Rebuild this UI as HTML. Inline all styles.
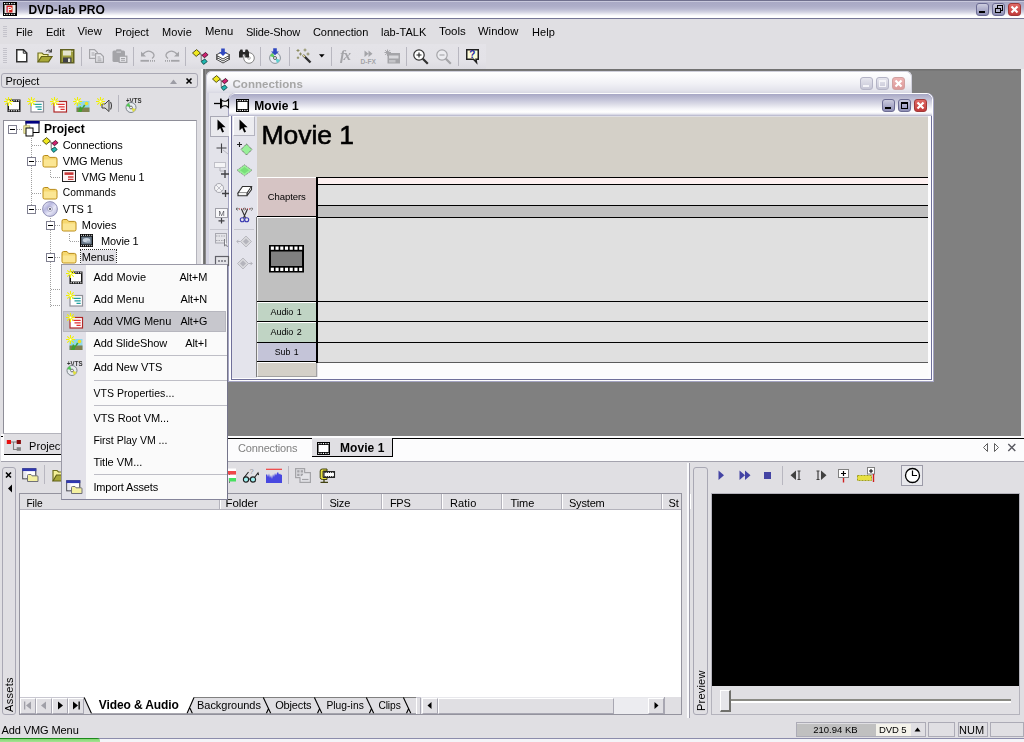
<!DOCTYPE html>
<html>
<head>
<meta charset="utf-8">
<title>DVD-lab PRO</title>
<style>
*{box-sizing:border-box;margin:0;padding:0}
html,body{width:1024px;height:742px;overflow:hidden;background:#e0dfe3}
body{position:relative;font-family:"Liberation Sans",sans-serif;font-size:12px;color:#000}
.a{position:absolute;display:block}
.t{position:absolute;white-space:nowrap;will-change:opacity}
svg{overflow:visible}
</style>
</head>
<body>
<div class="a" style="left:0px;top:0px;width:1024px;height:19px;background:linear-gradient(#70708e 0,#70708e 1px,#c8c8dc 1px,#c8c8dc 2px,#a9a9c5 2px,#adadc8 6px,#b9b9d1 9px,#d2d2e2 12px,#f0f0f5 14.5px,#fff 16px,#fff 18px,#767696 18px,#767696 19px);"></div>
<svg class="a" style="left:3px;top:2px;" width="14" height="14" viewBox="0 0 14 14"><rect x="0" y="0" width="14" height="14" fill="#000"/><rect x="1.5" y="3" width="11" height="8" fill="#e8e8e8"/><rect x="3.5" y="3.5" width="6" height="7" fill="#d02020"/><text x="4.6" y="9.8" font-size="7" font-weight="bold" fill="#fff" font-family="Liberation Sans,sans-serif">P</text><g fill="#fff"><rect x="1" y="1" width="1.2" height="1.2"/><rect x="3.4" y="1" width="1.2" height="1.2"/><rect x="5.8" y="1" width="1.2" height="1.2"/><rect x="8.2" y="1" width="1.2" height="1.2"/><rect x="10.6" y="1" width="1.2" height="1.2"/><rect x="1" y="11.8" width="1.2" height="1.2"/><rect x="3.4" y="11.8" width="1.2" height="1.2"/><rect x="5.8" y="11.8" width="1.2" height="1.2"/><rect x="8.2" y="11.8" width="1.2" height="1.2"/><rect x="10.6" y="11.8" width="1.2" height="1.2"/></g></svg>
<div class="t" style="left:28.4px;top:3.84px;font-size:12px;line-height:12px;font-weight:bold;letter-spacing:0.04px;">DVD-lab PRO</div>
<div class="a" style="left:976px;top:2.5px;width:13px;height:13px;background:linear-gradient(#ccccde,#b0b0cc 45%,#9090b6);border:1px solid #6c6c94;border-radius:3px;"></div>
<div class="a" style="left:979px;top:10.5px;width:6px;height:2px;background:#000;"></div>
<div class="a" style="left:992px;top:2.5px;width:13px;height:13px;background:linear-gradient(#ccccde,#b0b0cc 45%,#9090b6);border:1px solid #6c6c94;border-radius:3px;"></div>
<div class="a" style="left:997px;top:5.0px;width:5.5px;height:5.5px;border:1px solid #000;border-top-width:1.5px;"></div>
<div class="a" style="left:995px;top:7.5px;width:5.5px;height:5.5px;border:1px solid #000;border-top-width:1.5px;background:#b0b0ca;"></div>
<div class="a" style="left:1008px;top:2.5px;width:13px;height:13px;background:linear-gradient(#e06a66,#c23a3a);border:1px solid #a03838;border-radius:3px;"></div>
<svg class="a" style="left:1008px;top:2.5px;" width="13" height="13" viewBox="0 0 13 13"><path d="M3.5 3.5 L9.5 9.5 M9.5 3.5 L3.5 9.5" stroke="#fff" stroke-width="2.2" stroke-linecap="butt"/></svg>
<div class="a" style="left:3px;top:26px;width:4px;height:11px;background:repeating-linear-gradient(#c4c3cb 0,#c4c3cb 1px,transparent 1px,transparent 2px);"></div>
<div class="t" style="left:15.9px;top:27.11px;font-size:10.5px;line-height:10.5px;letter-spacing:-0.01px;">File</div>
<div class="t" style="left:45.9px;top:26.69px;font-size:11px;line-height:11px;letter-spacing:-0.02px;">Edit</div>
<div class="t" style="left:77.4px;top:26.48px;font-size:11.25px;line-height:11.25px;letter-spacing:0.07px;">View</div>
<div class="t" style="left:114.9px;top:26.69px;font-size:11px;line-height:11px;letter-spacing:-0.06px;">Project</div>
<div class="t" style="left:161.9px;top:26.69px;font-size:11px;line-height:11px;letter-spacing:0.14px;">Movie</div>
<div class="t" style="left:204.9px;top:26.48px;font-size:11.25px;line-height:11.25px;letter-spacing:0.08px;">Menu</div>
<div class="t" style="left:245.9px;top:26.69px;font-size:11px;line-height:11px;letter-spacing:-0.14px;">Slide-Show</div>
<div class="t" style="left:312.9px;top:26.69px;font-size:11px;line-height:11px;letter-spacing:-0.03px;">Connection</div>
<div class="t" style="left:380.9px;top:26.69px;font-size:11px;line-height:11px;letter-spacing:0.05px;">lab-TALK</div>
<div class="t" style="left:438.9px;top:26.27px;font-size:11.5px;line-height:11.5px;letter-spacing:0.01px;">Tools</div>
<div class="t" style="left:477.9px;top:26.48px;font-size:11.25px;line-height:11.25px;letter-spacing:0.08px;">Window</div>
<div class="t" style="left:531.9px;top:26.69px;font-size:11px;line-height:11px;letter-spacing:0.09px;">Help</div>
<div class="a" style="left:0px;top:44px;width:486px;height:25px;background:linear-gradient(#e4e3e8,#e3e2e7 70%,#dcdbe1);"></div>
<div class="a" style="left:3px;top:48px;width:4px;height:15px;background:repeating-linear-gradient(#c4c3cb 0,#c4c3cb 1px,transparent 1px,transparent 2px);"></div>
<div class="a" style="left:81px;top:47px;width:1px;height:19px;background:#b8b7c0;"></div>
<div class="a" style="left:133px;top:47px;width:1px;height:19px;background:#b8b7c0;"></div>
<div class="a" style="left:185px;top:47px;width:1px;height:19px;background:#b8b7c0;"></div>
<div class="a" style="left:260px;top:47px;width:1px;height:19px;background:#b8b7c0;"></div>
<div class="a" style="left:289px;top:47px;width:1px;height:19px;background:#b8b7c0;"></div>
<div class="a" style="left:331px;top:47px;width:1px;height:19px;background:#b8b7c0;"></div>
<div class="a" style="left:406px;top:47px;width:1px;height:19px;background:#b8b7c0;"></div>
<div class="a" style="left:458px;top:47px;width:1px;height:19px;background:#b8b7c0;"></div>
<div class="a" style="left:1px;top:73px;width:197px;height:15px;border:1px solid #a9a8b4;border-radius:3px;background:#e0dfe3;"></div>
<div class="t" style="left:5.4px;top:75.69px;font-size:11px;line-height:11px;letter-spacing:-0.06px;">Project</div>
<svg class="a" style="left:169px;top:77.5px;" width="10" height="8" viewBox="0 0 10 8"><path d="M1 6 L4.5 1.5 L8 6 Z" fill="#9c9ca4"/></svg>
<svg class="a" style="left:185px;top:77px;" width="10" height="8" viewBox="0 0 10 8"><path d="M1.5 1.5 L6.5 6.5 M6.5 1.5 L1.5 6.5" stroke="#000" stroke-width="1.6"/></svg>
<div class="a" style="left:118px;top:95px;width:1px;height:17px;background:#b8b7c0;"></div>
<div class="a" style="left:3px;top:120px;width:194px;height:314px;background:#fff;border:1px solid #8e8e98;border-right-color:#b4b4bc;border-bottom-color:#b4b4bc;"></div>
<div class="a" style="left:201px;top:69px;width:2px;height:368px;background:#f6f6f8;"></div>
<div class="a" style="left:203px;top:69px;width:821px;height:367px;background:#808080;"></div>
<div class="a" style="left:203px;top:69px;width:818px;height:2px;background:linear-gradient(#6e6e6e,#7a7a7a);"></div>
<div class="a" style="left:203px;top:69px;width:3px;height:367px;background:linear-gradient(90deg,#808080,#6c6c6c 50%,#989898);"></div>
<div class="a" style="left:1021px;top:69px;width:3px;height:368px;background:#f0f0f2;"></div>
<div class="a" style="left:206px;top:71px;width:706px;height:300px;background:#e0dfe3;border-radius:6px 6px 0 0;"></div>
<div class="a" style="left:206px;top:71px;width:706px;height:22px;background:linear-gradient(#ffffff 0,#fafafc 5px,#f0f0f5 12px,#e4e4ec 18px,#d4d4e0 22px);border-radius:6px 6px 0 0;border:1px solid #d0d0dc;border-bottom:none;"></div>
<div class="t" style="left:232.4px;top:78.57px;font-size:11.5px;line-height:11.5px;font-weight:bold;color:#a6a6a6;letter-spacing:0.08px;">Connections</div>
<div class="a" style="left:860px;top:76.5px;width:13px;height:13px;background:linear-gradient(#e6e6ee,#c6c6d6);border:1px solid #b4b4c6;border-radius:3px;"></div>
<div class="a" style="left:863px;top:84.5px;width:6px;height:2px;background:#f4f4f8;"></div>
<div class="a" style="left:876px;top:76.5px;width:13px;height:13px;background:linear-gradient(#e6e6ee,#c6c6d6);border:1px solid #b4b4c6;border-radius:3px;"></div>
<div class="a" style="left:879px;top:79.5px;width:7px;height:7px;border:1px solid #f4f4f8;border-top-width:2px;"></div>
<div class="a" style="left:892px;top:76.5px;width:13px;height:13px;background:linear-gradient(#eeb4b4,#dc9a9a);border:1px solid #d0a0a0;border-radius:3px;"></div>
<svg class="a" style="left:892px;top:76.5px;" width="13" height="13" viewBox="0 0 13 13"><path d="M3.5 3.5 L9.5 9.5 M9.5 3.5 L3.5 9.5" stroke="#fff" stroke-width="2.2" stroke-linecap="butt"/></svg>
<div class="a" style="left:206px;top:93px;width:23px;height:280px;background:#e3e3ea;border-left:3px solid #d4d4e2;"></div>
<div class="a" style="left:228px;top:92.5px;width:705.5px;height:289.5px;background:#a4a4c2;border-radius:7px 7px 0 0;"></div>
<div class="a" style="left:228.6px;top:93.2px;width:704.3px;height:288.2px;background:#fdfdfe;border-radius:6.5px 6.5px 0 0;"></div>
<div class="a" style="left:230.8px;top:94px;width:701px;height:286.2px;background:#70709a;border-radius:6px 6px 0 0;"></div>
<div class="a" style="left:232px;top:95px;width:698.6px;height:284px;background:#fdfdfe;border-radius:5px 5px 0 0;"></div>
<div class="a" style="left:229px;top:93.5px;width:703px;height:22px;background:linear-gradient(#a6a6c4 0,#b2b2cc 2px,#c6c6da 6px,#e0e0ea 11px,#f6f6fa 15px,#ffffff 18px,#e8e8f0 20px,#b0b0c8 22px);border-radius:6px 6px 0 0;"></div>
<div class="a" style="left:232px;top:116px;width:696px;height:260.5px;background:#e0dfe3;"></div>
<div class="t" style="left:254.2px;top:99.84px;font-size:12px;line-height:12px;font-weight:bold;letter-spacing:0.06px;">Movie 1</div>
<div class="a" style="left:882px;top:98.5px;width:13px;height:13px;background:linear-gradient(#ccccde,#b0b0cc 45%,#9090b6);border:1px solid #6c6c94;border-radius:3px;"></div>
<div class="a" style="left:885px;top:106.5px;width:6px;height:2px;background:#000;"></div>
<div class="a" style="left:898px;top:98.5px;width:13px;height:13px;background:linear-gradient(#ccccde,#b0b0cc 45%,#9090b6);border:1px solid #6c6c94;border-radius:3px;"></div>
<div class="a" style="left:901px;top:101.5px;width:7px;height:7px;border:1px solid #000;border-top-width:2px;"></div>
<div class="a" style="left:914px;top:98.5px;width:13px;height:13px;background:linear-gradient(#e06a66,#c23a3a);border:1px solid #a03838;border-radius:3px;"></div>
<svg class="a" style="left:914px;top:98.5px;" width="13" height="13" viewBox="0 0 13 13"><path d="M3.5 3.5 L9.5 9.5 M9.5 3.5 L3.5 9.5" stroke="#fff" stroke-width="2.2" stroke-linecap="butt"/></svg>
<svg class="a" style="left:236px;top:99px;" width="13" height="13" viewBox="0 0 13 13"><rect x="0" y="0" width="13" height="13" fill="#000"/><rect x="1.5" y="3" width="10" height="7" fill="#fff"/><rect x="1.20" y="1" width="1.2" height="1.2" fill="#fff"/><rect x="1.20" y="10.80" width="1.2" height="1.2" fill="#fff"/><rect x="3.55" y="1" width="1.2" height="1.2" fill="#fff"/><rect x="3.55" y="10.80" width="1.2" height="1.2" fill="#fff"/><rect x="5.90" y="1" width="1.2" height="1.2" fill="#fff"/><rect x="5.90" y="10.80" width="1.2" height="1.2" fill="#fff"/><rect x="8.25" y="1" width="1.2" height="1.2" fill="#fff"/><rect x="8.25" y="10.80" width="1.2" height="1.2" fill="#fff"/><rect x="10.60" y="1" width="1.2" height="1.2" fill="#fff"/><rect x="10.60" y="10.80" width="1.2" height="1.2" fill="#fff"/></svg>
<div class="a" style="left:232px;top:116px;width:25px;height:262px;background:#e4e4ec;"></div>
<div class="a" style="left:232.5px;top:116px;width:22px;height:20px;background:#ececf0;border:1px solid #fff;border-right-color:#b4b4c0;border-bottom-color:#b4b4c0;"></div>
<div class="a" style="left:257px;top:117px;width:671px;height:60px;background:#d4d0c8;"></div>
<div class="t" style="left:261.5px;top:121.97px;font-size:26.5px;line-height:26.5px;-webkit-text-stroke:0.6px #000;letter-spacing:-0.05px;">Movie 1</div>
<div class="a" style="left:257px;top:177px;width:59.5px;height:40px;background:#d6c4c4;border-top:1px solid #fff;border-left:1px solid #f0f0f0;"></div>
<div class="a" style="left:257px;top:217px;width:59.5px;height:85px;background:#c0c0c0;border-top:1px solid #fff;border-left:1px solid #f0f0f0;"></div>
<div class="a" style="left:257px;top:302px;width:59.5px;height:20px;background:#c0d4c4;border-top:1px solid #fff;border-left:1px solid #f0f0f0;"></div>
<div class="a" style="left:257px;top:322px;width:59.5px;height:20px;background:#c0d4c4;border-top:1px solid #fff;border-left:1px solid #f0f0f0;"></div>
<div class="a" style="left:257px;top:342px;width:59.5px;height:20px;background:#c4c4d8;border-top:1px solid #fff;border-left:1px solid #f0f0f0;"></div>
<div class="a" style="left:257px;top:362px;width:59.5px;height:14.5px;background:#d4d0c8;border-top:1px solid #fff;border-left:1px solid #f0f0f0;border-right:1px solid #a0a0a0;border-bottom:1px solid #a0a0a0;"></div>
<div class="a" style="left:318px;top:177px;width:609.5px;height:185px;background:#e0e0e0;"></div>
<div class="a" style="left:318px;top:177px;width:609.5px;height:1px;background:#000;"></div>
<div class="a" style="left:318px;top:178px;width:609.5px;height:5.5px;background:#fdf0f0;"></div>
<div class="a" style="left:318px;top:183.5px;width:609.5px;height:1px;background:#000;"></div>
<div class="a" style="left:318px;top:205px;width:609.5px;height:1px;background:#000;"></div>
<div class="a" style="left:318px;top:206px;width:609.5px;height:10.5px;background:#c0c0c0;"></div>
<div class="a" style="left:318px;top:216.5px;width:609.5px;height:1px;background:#000;"></div>
<div class="a" style="left:257px;top:301.2px;width:670.5px;height:1.2px;background:#000;"></div>
<div class="a" style="left:257px;top:321.3px;width:670.5px;height:1.2px;background:#000;"></div>
<div class="a" style="left:257px;top:341.5px;width:670.5px;height:1.2px;background:#000;"></div>
<div class="a" style="left:257px;top:360.8px;width:60px;height:1.2px;background:#000;"></div>
<div class="a" style="left:257px;top:216px;width:60px;height:1px;background:#000;"></div>
<div class="a" style="left:316px;top:177px;width:2px;height:185.5px;background:#000;"></div>
<div class="a" style="left:256px;top:217px;width:1px;height:160px;background:#7c7c7c;"></div>
<div class="a" style="left:318px;top:362px;width:609.5px;height:14.5px;background:#fcfcfc;"></div>
<div class="a" style="left:318px;top:361.8px;width:609.5px;height:1px;background:#5c5c5c;"></div>
<div class="t" style="left:267.8px;top:192.46px;font-size:9.5px;line-height:9.5px;letter-spacing:-0.08px;">Chapters</div>
<div class="t" style="left:270.4px;top:307.88px;font-size:9px;line-height:9px;word-spacing:1px;letter-spacing:-0.01px;">Audio 1</div>
<div class="t" style="left:270.4px;top:327.88px;font-size:9px;line-height:9px;word-spacing:1px;letter-spacing:-0.01px;">Audio 2</div>
<div class="t" style="left:274.8px;top:348.09px;font-size:8.75px;line-height:8.75px;word-spacing:1px;letter-spacing:-0.02px;">Sub 1</div>
<svg class="a" style="left:269px;top:245px;" width="35" height="27.5" viewBox="0 0 35 27.5"><rect x="0" y="0" width="35" height="27.5" fill="#000"/><rect x="2" y="6.5" width="31" height="14.5" fill="#808080"/><rect x="1.80" y="1.5" width="3.1" height="3.3" fill="#fff"/><rect x="1.80" y="22.7" width="3.1" height="3.3" fill="#fff"/><rect x="6.52" y="1.5" width="3.1" height="3.3" fill="#fff"/><rect x="6.52" y="22.7" width="3.1" height="3.3" fill="#fff"/><rect x="11.24" y="1.5" width="3.1" height="3.3" fill="#fff"/><rect x="11.24" y="22.7" width="3.1" height="3.3" fill="#fff"/><rect x="15.96" y="1.5" width="3.1" height="3.3" fill="#fff"/><rect x="15.96" y="22.7" width="3.1" height="3.3" fill="#fff"/><rect x="20.68" y="1.5" width="3.1" height="3.3" fill="#fff"/><rect x="20.68" y="22.7" width="3.1" height="3.3" fill="#fff"/><rect x="25.40" y="1.5" width="3.1" height="3.3" fill="#fff"/><rect x="25.40" y="22.7" width="3.1" height="3.3" fill="#fff"/><rect x="30.12" y="1.5" width="3.1" height="3.3" fill="#fff"/><rect x="30.12" y="22.7" width="3.1" height="3.3" fill="#fff"/></svg>
<div class="a" style="left:0px;top:436px;width:1024px;height:25px;background:#fcfcfd;"></div>
<div class="a" style="left:0px;top:461px;width:1024px;height:1px;background:#a4a3ae;"></div>
<div class="a" style="left:198px;top:438px;width:826px;height:1px;background:#000;"></div>
<div class="a" style="left:0px;top:434px;width:1px;height:28px;background:#e0dfe3;"></div>
<div class="a" style="left:1px;top:434px;width:3px;height:2px;background:#fcfcfd;"></div>
<div class="a" style="left:1px;top:436px;width:2px;height:1px;background:#000;"></div>
<div class="a" style="left:4px;top:434px;width:196px;height:2px;background:#e0dfe3;"></div>
<div class="a" style="left:4px;top:436px;width:120px;height:18px;background:#e0dfe3;"></div>
<div class="a" style="left:4px;top:454px;width:120px;height:1px;background:#000;"></div>
<div class="a" style="left:198px;top:436px;width:5px;height:3px;background:#e0dfe3;"></div>
<div class="a" style="left:198px;top:439px;width:2px;height:22px;background:#e0dfe3;"></div>
<svg class="a" style="left:6px;top:439px;" width="16" height="13" viewBox="0 0 16 13"><path d="M3 3 H12 M7.5 3 V10.5 H12" fill="none" stroke="#808080" stroke-width="1.1"/><rect x="0.8" y="1" width="4.2" height="4" fill="#e81010"/><rect x="10.7" y="1" width="4.2" height="4" fill="#880808"/><rect x="10.7" y="8.2" width="4.2" height="3.6" fill="#808080"/></svg>
<div class="t" style="left:29.1px;top:440.69px;font-size:11px;line-height:11px;letter-spacing:0.02px;">Project</div>
<div class="t" style="left:238.1px;top:442.69px;font-size:11px;line-height:11px;color:#808080;letter-spacing:-0.18px;">Connections</div>
<div class="a" style="left:312px;top:439px;width:81px;height:18px;background:#e0dfe3;border-right:1.5px solid #000;border-bottom:1.5px solid #000;"></div>
<div class="a" style="left:312px;top:438px;width:79.5px;height:1px;background:#e0dfe3;"></div>
<svg class="a" style="left:317px;top:442px;" width="13" height="13" viewBox="0 0 13 13"><rect x="0" y="0" width="13" height="13" fill="#000"/><rect x="1.5" y="3" width="10" height="7" fill="#fff"/><rect x="1.20" y="1" width="1.2" height="1.2" fill="#fff"/><rect x="1.20" y="10.80" width="1.2" height="1.2" fill="#fff"/><rect x="3.55" y="1" width="1.2" height="1.2" fill="#fff"/><rect x="3.55" y="10.80" width="1.2" height="1.2" fill="#fff"/><rect x="5.90" y="1" width="1.2" height="1.2" fill="#fff"/><rect x="5.90" y="10.80" width="1.2" height="1.2" fill="#fff"/><rect x="8.25" y="1" width="1.2" height="1.2" fill="#fff"/><rect x="8.25" y="10.80" width="1.2" height="1.2" fill="#fff"/><rect x="10.60" y="1" width="1.2" height="1.2" fill="#fff"/><rect x="10.60" y="10.80" width="1.2" height="1.2" fill="#fff"/></svg>
<div class="t" style="left:340px;top:442.14px;font-size:12px;line-height:12px;font-weight:bold;letter-spacing:0.06px;">Movie 1</div>
<svg class="a" style="left:980px;top:442px;" width="40" height="12" viewBox="0 0 40 12"><path d="M7.5 1.5 L3.5 5.5 L7.5 9.5 Z" fill="none" stroke="#606060" stroke-width="1"/><path d="M14.5 1.5 L18.5 5.5 L14.5 9.5 Z" fill="none" stroke="#606060" stroke-width="1"/><path d="M28.3 2 L35.3 9 M35.3 2 L28.3 9" stroke="#585860" stroke-width="1.4"/></svg>
<div class="a" style="left:1.5px;top:467px;width:14px;height:247.5px;border:1px solid #a9a8b4;border-radius:3px;"></div>
<svg class="a" style="left:5px;top:471px;" width="8" height="8" viewBox="0 0 8 8"><path d="M1 1.5 L6 6.5 M6 1.5 L1 6.5" stroke="#000" stroke-width="1.6"/></svg>
<svg class="a" style="left:7px;top:484px;" width="6" height="9" viewBox="0 0 6 9"><path d="M5 0.5 L1 4.5 L5 8.5 Z" fill="#000"/></svg>
<div class="t" style="left:3px;top:711.5px;font-size:11px;line-height:12px;transform-origin:0 0;transform:rotate(-90deg);letter-spacing:0.3px;">Assets</div>
<div class="a" style="left:44px;top:465px;width:1px;height:19px;background:#b8b7c0;"></div>
<div class="a" style="left:288px;top:466px;width:1px;height:18px;background:#b8b7c0;"></div>
<div class="a" style="left:19px;top:493px;width:663px;height:222px;border:1px solid #94939e;background:#fff;"></div>
<div class="a" style="left:20px;top:494px;width:661px;height:16px;background:#e0dfe3;border-bottom:1px solid #b4b3bc;"></div>
<div class="a" style="left:218.5px;top:494px;width:1px;height:15px;background:#b4b3bc;"></div>
<div class="a" style="left:219.5px;top:494px;width:1px;height:15px;background:#fff;"></div>
<div class="t" style="left:26.4px;top:498.62px;font-size:10.25px;line-height:10.25px;letter-spacing:-0.04px;">File</div>
<div class="a" style="left:321.0px;top:494px;width:1px;height:15px;background:#b4b3bc;"></div>
<div class="a" style="left:322.0px;top:494px;width:1px;height:15px;background:#fff;"></div>
<div class="t" style="left:225.4px;top:497.57px;font-size:11.5px;line-height:11.5px;letter-spacing:-0.04px;">Folder</div>
<div class="a" style="left:381.0px;top:494px;width:1px;height:15px;background:#b4b3bc;"></div>
<div class="a" style="left:382.0px;top:494px;width:1px;height:15px;background:#fff;"></div>
<div class="t" style="left:329.4px;top:497.99px;font-size:11px;line-height:11px;letter-spacing:-0.17px;">Size</div>
<div class="a" style="left:441.0px;top:494px;width:1px;height:15px;background:#b4b3bc;"></div>
<div class="a" style="left:442.0px;top:494px;width:1px;height:15px;background:#fff;"></div>
<div class="t" style="left:389.9px;top:497.99px;font-size:11px;line-height:11px;letter-spacing:-0.25px;">FPS</div>
<div class="a" style="left:501.0px;top:494px;width:1px;height:15px;background:#b4b3bc;"></div>
<div class="a" style="left:502.0px;top:494px;width:1px;height:15px;background:#fff;"></div>
<div class="t" style="left:449.9px;top:497.99px;font-size:11px;line-height:11px;letter-spacing:0.18px;">Ratio</div>
<div class="a" style="left:561.0px;top:494px;width:1px;height:15px;background:#b4b3bc;"></div>
<div class="a" style="left:562.0px;top:494px;width:1px;height:15px;background:#fff;"></div>
<div class="t" style="left:510.4px;top:497.99px;font-size:11px;line-height:11px;letter-spacing:-0.05px;">Time</div>
<div class="a" style="left:661.0px;top:494px;width:1px;height:15px;background:#b4b3bc;"></div>
<div class="a" style="left:662.0px;top:494px;width:1px;height:15px;background:#fff;"></div>
<div class="t" style="left:568.9px;top:497.99px;font-size:11px;line-height:11px;letter-spacing:-0.16px;">System</div>
<div class="a" style="left:688.5px;top:494px;width:1px;height:15px;background:#b4b3bc;"></div>
<div class="a" style="left:689.5px;top:494px;width:1px;height:15px;background:#fff;"></div>
<div class="t" style="left:668.4px;top:497.99px;font-size:11px;line-height:11px;letter-spacing:-0.01px;">St</div>
<div class="a" style="left:20px;top:697px;width:661px;height:16.5px;background:#e0dfe3;border-top:1px solid #c8c7d0;"></div>
<div class="a" style="left:20px;top:698px;width:16px;height:15.5px;background:#e0dfe3;border:1px solid #fff;border-right-color:#a8a7b2;border-bottom-color:#a8a7b2;"></div>
<svg class="a" style="left:20px;top:698px;" width="16" height="15.5" viewBox="0 0 16 15.5"><rect x="4" y="3.5" width="1.3" height="8" fill="#a0a0a8"/><path d="M11 3.5 L6 7.5 L11 11.5 Z" fill="#a0a0a8"/></svg>
<div class="a" style="left:36px;top:698px;width:16px;height:15.5px;background:#e0dfe3;border:1px solid #fff;border-right-color:#a8a7b2;border-bottom-color:#a8a7b2;"></div>
<svg class="a" style="left:36px;top:698px;" width="16" height="15.5" viewBox="0 0 16 15.5"><path d="M10 3.5 L5 7.5 L10 11.5 Z" fill="#a0a0a8"/></svg>
<div class="a" style="left:52px;top:698px;width:16px;height:15.5px;background:#e0dfe3;border:1px solid #fff;border-right-color:#a8a7b2;border-bottom-color:#a8a7b2;"></div>
<svg class="a" style="left:52px;top:698px;" width="16" height="15.5" viewBox="0 0 16 15.5"><path d="M6 3.5 L11 7.5 L6 11.5 Z" fill="#000"/></svg>
<div class="a" style="left:68px;top:698px;width:16px;height:15.5px;background:#e0dfe3;border:1px solid #fff;border-right-color:#a8a7b2;border-bottom-color:#a8a7b2;"></div>
<svg class="a" style="left:68px;top:698px;" width="16" height="15.5" viewBox="0 0 16 15.5"><path d="M5 3.5 L10 7.5 L5 11.5 Z" fill="#000"/><rect x="10.5" y="3.5" width="1.3" height="8" fill="#000"/></svg>
<svg class="a" style="left:84px;top:697px;" width="336" height="17" viewBox="0 0 336 17"><path d="M110 0.5 H332" stroke="#808080" stroke-width="1"/>
<path d="M0 0 L7.5 16.5 H103 L110 0 Z" fill="#fff"/>
<path d="M0.2 0.5 L7.5 16.5 M103 16.5 L110 0.5 M106 11.2 L108.4 16.5" fill="none" stroke="#000" stroke-width="1.1"/>
<path d="M179.3 0.5 L186.8 16.5 M182.3 16.5 L184.7 11.2" fill="none" stroke="#000" stroke-width="1.1"/><path d="M230.4 0.5 L237.9 16.5 M233.4 16.5 L235.8 11.2" fill="none" stroke="#000" stroke-width="1.1"/><path d="M282.3 0.5 L289.8 16.5 M285.3 16.5 L287.7 11.2" fill="none" stroke="#000" stroke-width="1.1"/><path d="M319.4 0.5 L326.9 16.5 M322.4 16.5 L324.8 11.2" fill="none" stroke="#000" stroke-width="1.1"/>
<path d="M7.5 16.8 H332" stroke="#8a8a94" stroke-width="1" fill="none"/></svg>
<div class="t" style="left:98.8px;top:699.24px;font-size:12px;line-height:12px;font-weight:bold;letter-spacing:-0.11px;">Video &amp; Audio</div>
<div class="t" style="left:197px;top:700.09px;font-size:11px;line-height:11px;letter-spacing:-0.03px;">Backgrounds</div>
<div class="t" style="left:275.2px;top:700.09px;font-size:11px;line-height:11px;letter-spacing:-0.15px;">Objects</div>
<div class="t" style="left:326.4px;top:700.72px;font-size:10.25px;line-height:10.25px;letter-spacing:0.05px;">Plug-ins</div>
<div class="t" style="left:378.4px;top:700.72px;font-size:10.25px;line-height:10.25px;letter-spacing:-0.10px;">Clips</div>
<div class="a" style="left:416px;top:698px;width:1px;height:15.5px;background:#fff;"></div>
<div class="a" style="left:420px;top:698px;width:1px;height:15.5px;background:#a8a7b2;"></div>
<div class="a" style="left:421px;top:697px;width:244px;height:16.5px;background:#e8e8ec;"></div>
<div class="a" style="left:422px;top:698px;width:16px;height:15.5px;background:#e0dfe3;border:1px solid #fff;border-right-color:#a8a7b2;border-bottom-color:#a8a7b2;"></div>
<svg class="a" style="left:422px;top:698px;" width="16" height="15.5" viewBox="0 0 16 15.5"><path d="M9.5 4 L5.5 7.5 L9.5 11 Z" fill="#000"/></svg>
<div class="a" style="left:438px;top:698px;width:176px;height:15.5px;background:#e0dfe3;border:1px solid #fff;border-right-color:#a8a7b2;border-bottom-color:#a8a7b2;"></div>
<div class="a" style="left:614px;top:698px;width:34px;height:15.5px;background:#ececf0;"></div>
<div class="a" style="left:648px;top:698px;width:16px;height:15.5px;background:#e0dfe3;border:1px solid #fff;border-right-color:#a8a7b2;border-bottom-color:#a8a7b2;"></div>
<svg class="a" style="left:648px;top:698px;" width="16" height="15.5" viewBox="0 0 16 15.5"><path d="M6.5 4 L10.5 7.5 L6.5 11 Z" fill="#000"/></svg>
<div class="a" style="left:664px;top:697px;width:17px;height:16.5px;background:#e0dfe3;border-left:1px solid #a8a7b2;"></div>
<div class="a" style="left:687px;top:463px;width:2px;height:255px;background:#fafafc;"></div>
<div class="a" style="left:689px;top:463px;width:1px;height:255px;background:#a09fac;"></div>
<div class="a" style="left:693px;top:467px;width:14.5px;height:247.5px;border:1px solid #a9a8b4;border-radius:3px;"></div>
<div class="t" style="left:694.5px;top:710.5px;font-size:11px;line-height:12px;transform-origin:0 0;transform:rotate(-90deg);letter-spacing:0.2px;">Preview</div>
<div class="a" style="left:711px;top:493px;width:309px;height:222px;border:1px solid #b4b3bc;"></div>
<div class="a" style="left:712px;top:494px;width:307px;height:192px;background:#000;"></div>
<div class="a" style="left:730px;top:699px;width:281px;height:2px;background:#8a8a84;"></div>
<div class="a" style="left:730px;top:701px;width:281px;height:2px;background:#fff;"></div>
<div class="a" style="left:720px;top:690px;width:11px;height:22px;background:#e6e6ea;border:1px solid #fff;border-right:2px solid #70706c;border-bottom:2px solid #70706c;"></div>
<svg class="a" style="left:718px;top:470px;" width="8" height="11" viewBox="0 0 8 11"><path d="M0.5 0.5 L6 5.2 L0.5 10 Z" fill="#4444a4"/></svg>
<svg class="a" style="left:739px;top:470px;" width="12" height="11" viewBox="0 0 12 11"><path d="M0.5 0.5 L6 5.2 L0.5 10 Z M6 0.5 L11.5 5.2 L6 10 Z" fill="#4444a4"/></svg>
<div class="a" style="left:764px;top:472px;width:7px;height:7px;background:#4444a4;"></div>
<div class="a" style="left:782px;top:466px;width:1px;height:19px;background:#b8b7c0;"></div>
<svg class="a" style="left:790px;top:470px;" width="12" height="11" viewBox="0 0 12 11"><path d="M6 0.5 L0.5 5.2 L6 10 Z" fill="#404040"/><path d="M7.5 1 H10.5 M9 1 V9.5 M7.5 9.5 H10.5" stroke="#404040" stroke-width="1.2" fill="none"/></svg>
<svg class="a" style="left:815px;top:470px;" width="12" height="11" viewBox="0 0 12 11"><path d="M6 0.5 L11.5 5.2 L6 10 Z" fill="#404040"/><path d="M1.5 1 H4.5 M3 1 V9.5 M1.5 9.5 H4.5" stroke="#404040" stroke-width="1.2" fill="none"/></svg>
<svg class="a" style="left:838px;top:469px;" width="12" height="14" viewBox="0 0 12 14"><rect x="0.5" y="0.5" width="10" height="8" fill="#fff" stroke="#808080"/><path d="M3 4.5 H8 M5.5 2 V7" stroke="#000" stroke-width="1.2"/><path d="M5.5 9 V13.5" stroke="#d02020" stroke-width="1.4"/></svg>
<svg class="a" style="left:857px;top:467px;" width="19" height="16" viewBox="0 0 19 16"><rect x="10.5" y="0.5" width="7" height="6.5" fill="#fff" stroke="#808080"/><path d="M12 4 H16 M14 2 V6" stroke="#000" stroke-width="1"/><path d="M16.5 7 V15" stroke="#d02020" stroke-width="1.4"/><rect x="0.5" y="8.5" width="14" height="5" fill="#e8e040" stroke="#a0a020" stroke-dasharray="2 1"/></svg>
<div class="a" style="left:900.5px;top:464.5px;width:22.5px;height:21px;border:1px solid #9c9ba8;background:#e8e8ec;"></div>
<svg class="a" style="left:904px;top:467px;" width="17" height="17" viewBox="0 0 17 17"><circle cx="8.5" cy="8.5" r="7" fill="#fff" stroke="#000" stroke-width="1.3"/><path d="M8.5 3.5 V8.5 H13" stroke="#000" stroke-width="1.2" fill="none"/></svg>
<div class="t" style="left:1.4px;top:725.09px;font-size:11px;line-height:11px;letter-spacing:-0.08px;">Add VMG Menu</div>
<div class="a" style="left:795.5px;top:722px;width:130px;height:15px;border:1px solid #acabb6;"></div>
<div class="a" style="left:797px;top:723.5px;width:78.5px;height:12px;background:#c0c0c0;"></div>
<div class="a" style="left:875.5px;top:723.5px;width:35.5px;height:12px;background:#f4f2ea;"></div>
<div class="t" style="left:813.2px;top:725.16px;font-size:9.5px;line-height:9.5px;letter-spacing:0.00px;">210.94 KB</div>
<div class="t" style="left:879px;top:725.16px;font-size:9.5px;line-height:9.5px;letter-spacing:-0.10px;">DVD 5</div>
<svg class="a" style="left:914px;top:726px;" width="8" height="6" viewBox="0 0 8 6"><path d="M0.5 5.5 L3.5 1.5 L6.5 5.5 Z" fill="#000"/></svg>
<div class="a" style="left:928px;top:722px;width:27px;height:15px;border:1px solid #acabb6;"></div>
<div class="a" style="left:957.5px;top:722px;width:30.5px;height:15px;border:1px solid #acabb6;"></div>
<div class="t" style="left:958.9px;top:724.69px;font-size:11px;line-height:11px;letter-spacing:0.17px;">NUM</div>
<div class="a" style="left:990px;top:722px;width:34px;height:15px;border:1px solid #acabb6;"></div>
<div class="a" style="left:0px;top:738px;width:1024px;height:1px;background:#8c8cac;"></div>
<div class="a" style="left:0px;top:739px;width:1024px;height:3px;background:#f4f4f8;"></div>
<div class="a" style="left:0px;top:738px;width:100px;height:4px;background:linear-gradient(#1c8a1c 0,#1c8a1c 1px,#8ad878 1.5px,#a4e494 4px);border-radius:0 3px 0 0;"></div>
<div class="a" style="left:17px;top:129px;width:6px;height:1px;background:repeating-linear-gradient(90deg,#a0a0a0 0,#a0a0a0 1px,transparent 1px,transparent 2px);"></div>
<div class="a" style="left:31px;top:138px;width:1px;height:67px;background:repeating-linear-gradient(#a0a0a0 0,#a0a0a0 1px,transparent 1px,transparent 2px);"></div>
<div class="a" style="left:32px;top:145px;width:10px;height:1px;background:repeating-linear-gradient(90deg,#a0a0a0 0,#a0a0a0 1px,transparent 1px,transparent 2px);"></div>
<div class="a" style="left:36px;top:161px;width:6px;height:1px;background:repeating-linear-gradient(90deg,#a0a0a0 0,#a0a0a0 1px,transparent 1px,transparent 2px);"></div>
<div class="a" style="left:32px;top:193px;width:10px;height:1px;background:repeating-linear-gradient(90deg,#a0a0a0 0,#a0a0a0 1px,transparent 1px,transparent 2px);"></div>
<div class="a" style="left:36px;top:209px;width:6px;height:1px;background:repeating-linear-gradient(90deg,#a0a0a0 0,#a0a0a0 1px,transparent 1px,transparent 2px);"></div>
<div class="a" style="left:50px;top:170px;width:1px;height:8px;background:repeating-linear-gradient(#a0a0a0 0,#a0a0a0 1px,transparent 1px,transparent 2px);"></div>
<div class="a" style="left:51px;top:177px;width:10px;height:1px;background:repeating-linear-gradient(90deg,#a0a0a0 0,#a0a0a0 1px,transparent 1px,transparent 2px);"></div>
<div class="a" style="left:50px;top:218px;width:1px;height:89px;background:repeating-linear-gradient(#a0a0a0 0,#a0a0a0 1px,transparent 1px,transparent 2px);"></div>
<div class="a" style="left:55px;top:225px;width:6px;height:1px;background:repeating-linear-gradient(90deg,#a0a0a0 0,#a0a0a0 1px,transparent 1px,transparent 2px);"></div>
<div class="a" style="left:55px;top:257px;width:6px;height:1px;background:repeating-linear-gradient(90deg,#a0a0a0 0,#a0a0a0 1px,transparent 1px,transparent 2px);"></div>
<div class="a" style="left:69px;top:234px;width:1px;height:8px;background:repeating-linear-gradient(#a0a0a0 0,#a0a0a0 1px,transparent 1px,transparent 2px);"></div>
<div class="a" style="left:70px;top:241px;width:10px;height:1px;background:repeating-linear-gradient(90deg,#a0a0a0 0,#a0a0a0 1px,transparent 1px,transparent 2px);"></div>
<div class="a" style="left:51px;top:289px;width:11px;height:1px;background:repeating-linear-gradient(90deg,#a0a0a0 0,#a0a0a0 1px,transparent 1px,transparent 2px);"></div>
<div class="a" style="left:51px;top:305px;width:11px;height:1px;background:repeating-linear-gradient(90deg,#a0a0a0 0,#a0a0a0 1px,transparent 1px,transparent 2px);"></div>
<div class="a" style="left:8px;top:125px;width:9px;height:9px;border:1px solid #808090;background:#fff;"></div>
<div class="a" style="left:10px;top:129px;width:5px;height:1px;background:#000;"></div>
<div class="a" style="left:27px;top:157px;width:9px;height:9px;border:1px solid #808090;background:#fff;"></div>
<div class="a" style="left:29px;top:161px;width:5px;height:1px;background:#000;"></div>
<div class="a" style="left:27px;top:205px;width:9px;height:9px;border:1px solid #808090;background:#fff;"></div>
<div class="a" style="left:29px;top:209px;width:5px;height:1px;background:#000;"></div>
<div class="a" style="left:46px;top:221px;width:9px;height:9px;border:1px solid #808090;background:#fff;"></div>
<div class="a" style="left:48px;top:225px;width:5px;height:1px;background:#000;"></div>
<div class="a" style="left:46px;top:253px;width:9px;height:9px;border:1px solid #808090;background:#fff;"></div>
<div class="a" style="left:48px;top:257px;width:5px;height:1px;background:#000;"></div>
<svg class="a" style="left:23px;top:121px;" width="17" height="16" viewBox="0 0 17 16"><rect x="3" y="0.5" width="13" height="11" fill="#fff" stroke="#000" stroke-width="1"/><rect x="2.5" y="0" width="14" height="2.6" fill="#000080"/><rect x="0.8" y="4.8" width="6" height="7.5" fill="#f4f0a8" stroke="#b0a860" stroke-width="0.8"/><rect x="3" y="7" width="7" height="8" fill="#fff" stroke="#000" stroke-width="1"/></svg>
<svg class="a" style="left:42px;top:137px;" width="16" height="16" viewBox="0 0 16 16"><path d="M7.5 5 H9.2 V11.6 H10.5 M9.2 6.2 H10.5" fill="none" stroke="#707070" stroke-width="1"/><path d="M0.5 4 L4.6 0.6 L8.4 4 L4.2 7.4 Z" fill="#f0e820" stroke="#303000" stroke-width="0.8"/><path d="M10 6.3 L13.6 3.4 L16 5.8 L12.4 8.8 Z" fill="#d02070" stroke="#300018" stroke-width="0.8"/><path d="M9.2 12.6 L12.8 10 L15.2 12.6 L11.6 15.4 Z" fill="#20b8b0" stroke="#003838" stroke-width="0.8"/></svg>
<svg class="a" style="left:42px;top:154px;" width="16" height="14" viewBox="0 0 16 14"><path d="M1 3.2 Q1 1.5 2.6 1.5 H6 L7.6 3.4 H13.4 Q15 3.4 15 5 V11.4 Q15 13 13.4 13 H2.6 Q1 13 1 11.4 Z" fill="#f6d870" stroke="#b88a18" stroke-width="1"/><path d="M1.8 5.6 H14.2 V11.4 Q14.2 12.3 13.3 12.3 H2.7 Q1.8 12.3 1.8 11.4 Z" fill="#fbe694"/></svg>
<svg class="a" style="left:62px;top:170px;" width="14" height="12" viewBox="0 0 14 12"><rect x="0.5" y="0.5" width="13" height="11" fill="#fff4f4" stroke="#202020" stroke-width="1"/><rect x="2.5" y="2.3" width="9" height="2.6" fill="#c83838"/><path d="M6 7 H11.5 M6 9.3 H11.5" stroke="#d04040" stroke-width="1.3"/></svg>
<svg class="a" style="left:42px;top:186px;" width="16" height="14" viewBox="0 0 16 14"><path d="M1 3.2 Q1 1.5 2.6 1.5 H6 L7.6 3.4 H13.4 Q15 3.4 15 5 V11.4 Q15 13 13.4 13 H2.6 Q1 13 1 11.4 Z" fill="#f6d870" stroke="#b88a18" stroke-width="1"/><path d="M1.8 5.6 H14.2 V11.4 Q14.2 12.3 13.3 12.3 H2.7 Q1.8 12.3 1.8 11.4 Z" fill="#fbe694"/></svg>
<svg class="a" style="left:42px;top:201px;" width="16" height="16" viewBox="0 0 16 16"><defs><linearGradient id="dv" x1="0" y1="0" x2="1" y2="1"><stop offset="0" stop-color="#ffffff"/><stop offset="0.35" stop-color="#b8b8e0"/><stop offset="0.6" stop-color="#e8e8f8"/><stop offset="1" stop-color="#a8a8d0"/></linearGradient></defs><circle cx="8" cy="8" r="7.4" fill="url(#dv)" stroke="#8888b0" stroke-width="0.9"/><circle cx="8" cy="8" r="2.4" fill="#f4f4fc" stroke="#9090b0" stroke-width="0.7"/><circle cx="8" cy="8" r="1" fill="#404058"/></svg>
<svg class="a" style="left:61px;top:218px;" width="16" height="14" viewBox="0 0 16 14"><path d="M1 3.2 Q1 1.5 2.6 1.5 H6 L7.6 3.4 H13.4 Q15 3.4 15 5 V11.4 Q15 13 13.4 13 H2.6 Q1 13 1 11.4 Z" fill="#f6d870" stroke="#b88a18" stroke-width="1"/><path d="M1.8 5.6 H14.2 V11.4 Q14.2 12.3 13.3 12.3 H2.7 Q1.8 12.3 1.8 11.4 Z" fill="#fbe694"/></svg>
<svg class="a" style="left:80.4px;top:234px;" width="13" height="13" viewBox="0 0 13 13"><rect x="0" y="0" width="13" height="13" fill="#080808"/><rect x="1.2" y="2.6" width="10.6" height="7.8" fill="#687888"/><ellipse cx="6.5" cy="6.3" rx="3.6" ry="2.2" fill="#c8d4e0"/><ellipse cx="8.5" cy="7.6" rx="2" ry="1.2" fill="#a0b0c0"/><rect x="1.0" y="0.8" width="1" height="1" fill="#fff"/><rect x="1.0" y="11.2" width="1" height="1" fill="#fff"/><rect x="3.0" y="0.8" width="1" height="1" fill="#fff"/><rect x="3.0" y="11.2" width="1" height="1" fill="#fff"/><rect x="5.1" y="0.8" width="1" height="1" fill="#fff"/><rect x="5.1" y="11.2" width="1" height="1" fill="#fff"/><rect x="7.1" y="0.8" width="1" height="1" fill="#fff"/><rect x="7.1" y="11.2" width="1" height="1" fill="#fff"/><rect x="9.2" y="0.8" width="1" height="1" fill="#fff"/><rect x="9.2" y="11.2" width="1" height="1" fill="#fff"/><rect x="11.2" y="0.8" width="1" height="1" fill="#fff"/><rect x="11.2" y="11.2" width="1" height="1" fill="#fff"/></svg>
<svg class="a" style="left:61px;top:250px;" width="16" height="14" viewBox="0 0 16 14"><path d="M1 3.2 Q1 1.5 2.6 1.5 H6 L7.6 3.4 H13.4 Q15 3.4 15 5 V11.4 Q15 13 13.4 13 H2.6 Q1 13 1 11.4 Z" fill="#f6d870" stroke="#b88a18" stroke-width="1"/><path d="M1.8 5.6 H14.2 V11.4 Q14.2 12.3 13.3 12.3 H2.7 Q1.8 12.3 1.8 11.4 Z" fill="#fbe694"/></svg>
<div class="t" style="left:43.9px;top:123.44px;font-size:12px;line-height:12px;font-weight:bold;letter-spacing:0.04px;">Project</div>
<div class="t" style="left:62.8px;top:139.69px;font-size:11px;line-height:11px;letter-spacing:-0.12px;">Connections</div>
<div class="t" style="left:62.8px;top:155.69px;font-size:11px;line-height:11px;letter-spacing:-0.14px;">VMG Menus</div>
<div class="t" style="left:81.8px;top:171.90px;font-size:10.75px;line-height:10.75px;letter-spacing:-0.06px;">VMG Menu 1</div>
<div class="t" style="left:62.8px;top:188.32px;font-size:10.25px;line-height:10.25px;letter-spacing:0.08px;">Commands</div>
<div class="t" style="left:62.8px;top:203.69px;font-size:11px;line-height:11px;letter-spacing:-0.14px;">VTS 1</div>
<div class="t" style="left:81.8px;top:219.69px;font-size:11px;line-height:11px;letter-spacing:-0.05px;">Movies</div>
<div class="t" style="left:101.1px;top:235.69px;font-size:11px;line-height:11px;letter-spacing:-0.16px;">Movie 1</div>
<div class="a" style="left:81px;top:250px;width:34.5px;height:13.5px;background:#e2e1e6;"></div>
<div class="t" style="left:81.8px;top:251.69px;font-size:11px;line-height:11px;letter-spacing:-0.13px;">Menus</div>
<div class="a" style="left:80px;top:249px;width:36.5px;height:15.5px;border:1px dotted #303030;"></div>
<div class="a" style="left:0;top:0;z-index:10">
<div class="a" style="left:61px;top:264px;width:167px;height:236px;background:#fafafa;border:1px solid #9a99a6;border-right-color:#74748a;border-bottom-color:#85849a;"></div>
<div class="a" style="left:62px;top:265px;width:24px;height:234px;background:#e2e1e8;"></div>
<div class="a" style="left:63px;top:311px;width:163px;height:21px;background:#c7c7cd;border:1px solid #b6b6be;"></div>
<div class="t" style="left:93.4px;top:271.69px;font-size:11px;line-height:11px;letter-spacing:0.11px;">Add Movie</div>
<div class="t" style="left:179.4px;top:271.69px;font-size:11px;line-height:11px;letter-spacing:-0.13px;">Alt+M</div>
<div class="t" style="left:93.4px;top:293.69px;font-size:11px;line-height:11px;letter-spacing:0.12px;">Add Menu</div>
<div class="t" style="left:180.4px;top:293.69px;font-size:11px;line-height:11px;letter-spacing:-0.08px;">Alt+N</div>
<div class="t" style="left:93.4px;top:315.99px;font-size:11px;line-height:11px;letter-spacing:-0.03px;">Add VMG Menu</div>
<div class="t" style="left:180.4px;top:316.20px;font-size:10.75px;line-height:10.75px;letter-spacing:-0.07px;">Alt+G</div>
<div class="t" style="left:93.4px;top:337.69px;font-size:11px;line-height:11px;letter-spacing:-0.06px;">Add SlideShow</div>
<div class="t" style="left:185.2px;top:337.69px;font-size:11px;line-height:11px;letter-spacing:-0.06px;">Alt+I</div>
<div class="t" style="left:93.4px;top:362.49px;font-size:11px;line-height:11px;letter-spacing:-0.02px;">Add New VTS</div>
<div class="t" style="left:93.4px;top:388.31px;font-size:10.5px;line-height:10.5px;letter-spacing:0.06px;">VTS Properties...</div>
<div class="t" style="left:93.4px;top:412.69px;font-size:11px;line-height:11px;letter-spacing:-0.05px;">VTS Root VM...</div>
<div class="t" style="left:93.4px;top:435.21px;font-size:10.5px;line-height:10.5px;letter-spacing:-0.01px;">First Play VM ...</div>
<div class="t" style="left:93.4px;top:456.69px;font-size:11px;line-height:11px;letter-spacing:-0.02px;">Title VM...</div>
<div class="t" style="left:93.4px;top:481.99px;font-size:11px;line-height:11px;letter-spacing:-0.15px;">Import Assets</div>
<div class="a" style="left:94px;top:355px;width:133px;height:1px;background:#bebec6;"></div>
<div class="a" style="left:94px;top:380px;width:133px;height:1px;background:#bebec6;"></div>
<div class="a" style="left:94px;top:405px;width:133px;height:1px;background:#bebec6;"></div>
<div class="a" style="left:94px;top:474px;width:133px;height:1px;background:#bebec6;"></div>
</div>
<svg class="a" style="left:16px;top:49px;" width="12" height="14" viewBox="0 0 12 14"><path d="M0.75 0.75 H7.5 L10.75 4 V12.75 H0.75 Z" fill="#fff" stroke="#303030" stroke-width="1.5"/><path d="M7.3 0.8 V4.2 H10.7" fill="none" stroke="#303030" stroke-width="1"/></svg>
<svg class="a" style="left:37px;top:48px;" width="16" height="15" viewBox="0 0 16 15"><path d="M1 14 V5 H5 L6.5 6.5 H11 V9" fill="#f4f098" stroke="#707020" stroke-width="1.2"/><path d="M1 14 L4.5 8.5 H15 L11.5 14 Z" fill="#a8a838" stroke="#606018" stroke-width="1.2"/><path d="M9 3.5 Q11.5 0.5 14 3.5 M14.4 1 V4 H11.5" fill="none" stroke="#404040" stroke-width="1.1"/></svg>
<svg class="a" style="left:60px;top:49px;" width="15" height="15" viewBox="0 0 15 15"><rect x="0.75" y="0.75" width="13" height="13" fill="#a0a040" stroke="#606020" stroke-width="1.5"/><rect x="3" y="1.5" width="8" height="5" fill="#e4e4d0"/><rect x="3" y="8.5" width="8.5" height="5" fill="#404048"/><rect x="8" y="9.5" width="2.2" height="3.5" fill="#e4e4d0"/><rect x="11.6" y="1.8" width="1" height="1.2" fill="#e4e4d0"/></svg>
<svg class="a" style="left:89px;top:49px;" width="16" height="14" viewBox="0 0 16 14"><path d="M0.6 0.6 H5.5 L8.4 3.5 V9.4 H0.6 Z" fill="#e8e8ec" stroke="#a4a4a8" stroke-width="1.2"/><path d="M2.5 4 H5.5 M2.5 6 H6.5" stroke="#a4a4a8" stroke-width="1"/><path d="M6.6 4.6 H11.5 L14.4 7.5 V13.4 H6.6 Z" fill="#e8e8ec" stroke="#a4a4a8" stroke-width="1.2"/><path d="M8.5 8 H11.5 M8.5 10 H12.5 M8.5 11.8 H12.5" stroke="#a4a4a8" stroke-width="1"/></svg>
<svg class="a" style="left:112px;top:49px;" width="16" height="14" viewBox="0 0 16 14"><rect x="0.5" y="1.5" width="12.5" height="11.5" rx="1.5" fill="#a4a4a8"/><rect x="4" y="0.3" width="5.5" height="2.6" rx="1" fill="#a4a4a8"/><rect x="4.5" y="2.6" width="4.5" height="1" fill="#d8d8dc"/><rect x="7.2" y="7.2" width="7.6" height="6.2" fill="#e4e4e8" stroke="#a4a4a8" stroke-width="1.2"/><path d="M9 9.5 H13 M9 11.3 H13" stroke="#a4a4a8" stroke-width="1"/></svg>
<svg class="a" style="left:140px;top:50px;" width="16" height="13" viewBox="0 0 16 13"><path d="M2.5 4.5 Q8 -1.5 13 3 Q15.5 6 12 8.5" fill="none" stroke="#a4a4a8" stroke-width="1.3"/><path d="M1 1.5 V6.5 H6 Z" fill="#a4a4a8"/><path d="M0.5 10.8 H9" stroke="#a4a4a8" stroke-width="1.8"/><path d="M10 10.8 H15" stroke="#a4a4a8" stroke-width="1.8" stroke-dasharray="1 1"/></svg>
<svg class="a" style="left:163.5px;top:50px;" width="16" height="13" viewBox="0 0 16 13"><path d="M13.5 4.5 Q8 -1.5 3 3 Q0.5 6 4 8.5" fill="none" stroke="#a4a4a8" stroke-width="1.3"/><path d="M15 1.5 V6.5 H10 Z" fill="#a4a4a8"/><path d="M7 10.8 H15.5" stroke="#a4a4a8" stroke-width="1.8"/><path d="M1 10.8 H6" stroke="#a4a4a8" stroke-width="1.8" stroke-dasharray="1 1"/></svg>
<svg class="a" style="left:192px;top:48.5px;" width="16" height="16" viewBox="0 0 16 16"><path d="M7.5 5 H9.2 V11.6 H10.5 M9.2 6.2 H10.5" fill="none" stroke="#707070" stroke-width="1"/><path d="M0.5 4 L4.6 0.6 L8.4 4 L4.2 7.4 Z" fill="#f0e820" stroke="#303000" stroke-width="0.8"/><path d="M10 6.3 L13.6 3.4 L16 5.8 L12.4 8.8 Z" fill="#d02070" stroke="#300018" stroke-width="0.8"/><path d="M9.2 12.6 L12.8 10 L15.2 12.6 L11.6 15.4 Z" fill="#20b8b0" stroke="#003838" stroke-width="0.8"/></svg>
<svg class="a" style="left:215px;top:48px;" width="16" height="16" viewBox="0 0 16 16"><path d="M1 11 L8 7.5 L15 11 L8 15 Z" fill="#fff" stroke="#303030" stroke-width="0.9"/><path d="M1 9 L8 5.5 L15 9 L8 13 Z" fill="#fff" stroke="#303030" stroke-width="0.9"/><path d="M1 7 L8 3.5 L15 7 L8 11 Z" fill="#fff" stroke="#303030" stroke-width="0.9"/><path d="M6.2 0.5 H9.8 V4 H12 L8 8 L4 4 H6.2 Z" fill="#3048c0"/></svg>
<svg class="a" style="left:237.5px;top:48px;" width="17" height="16" viewBox="0 0 17 16"><circle cx="11" cy="10" r="5.3" fill="#fff" stroke="#808080" stroke-width="1"/><circle cx="11" cy="10" r="1.4" fill="#e8e8e8" stroke="#909090" stroke-width="0.6"/><path d="M1 4 L2.5 1.5 H4.5 L5 4 H7 L7.5 1.5 H9.5 L11 4 V9.5 H7.2 V6.5 H4.8 V9.5 H1 Z" fill="#282828"/></svg>
<svg class="a" style="left:268.5px;top:48px;" width="12" height="16" viewBox="0 0 12 16"><circle cx="6" cy="10" r="5.4" fill="#e8ecf4" stroke="#808890" stroke-width="0.9"/><path d="M6 10 L1 8 A5.4 5.4 0 0 1 4 5 Z" fill="#60d060"/><path d="M6 10 L11 12 A5.4 5.4 0 0 1 8 15 Z" fill="#60d0d0"/><circle cx="6" cy="10" r="1.5" fill="#fff" stroke="#404040" stroke-width="0.8"/><path d="M4.2 0.3 H7.8 V3.4 H10 L6 7.2 L2 3.4 H4.2 Z" fill="#3048c0"/></svg>
<svg class="a" style="left:296px;top:48px;" width="16" height="16" viewBox="0 0 16 16"><path d="M7 7 L14.5 14.5" stroke="#303030" stroke-width="2.4"/><path d="M7 7 L9 9" stroke="#e8e0a0" stroke-width="1.4"/><g stroke="#8c8c60" stroke-width="1"><path d="M2 1 V4 M0.5 2.5 H3.5"/><path d="M9 0.5 V3.5 M7.5 2 H10.5"/><path d="M4.5 4.5 V7.5 M3 6 H6"/><path d="M12 4.5 V7.5 M10.5 6 H13.5"/><path d="M2 8.5 V11 M0.8 9.8 H3.2"/></g></svg>
<svg class="a" style="left:318.5px;top:54px;" width="6" height="4" viewBox="0 0 6 4"><path d="M0 0.3 H5.6 L2.8 3.6 Z" fill="#000"/></svg>
<div class="t" style="left:340px;top:47px;font-size:15px;line-height:16px;font-style:italic;font-weight:bold;font-family:'Liberation Serif',serif;color:#a4a4a8;letter-spacing:-1.5px;">fx</div>
<svg class="a" style="left:360px;top:49.5px;" width="17" height="15" viewBox="0 0 17 15"><path d="M4.5 0.5 L8.5 3.8 L4.5 7 Z M8.5 0.5 L12.5 3.8 L8.5 7 Z" fill="#a4a4a8"/><text x="0.5" y="14" font-size="6.5" font-weight="bold" fill="#a4a4a8" font-family="Liberation Sans,sans-serif" textLength="15.5" lengthAdjust="spacingAndGlyphs">D-FX</text></svg>
<svg class="a" style="left:384px;top:49px;" width="16" height="15" viewBox="0 0 16 15"><rect x="3.5" y="4" width="12.5" height="10.5" fill="#a4a4a8"/><rect x="5" y="6.5" width="9.5" height="3" fill="#d8d8dc"/><rect x="5" y="11" width="6.5" height="2.5" fill="#c4c4c8"/><path d="M3.5 0.5 V7 M0.5 3.5 H7 M1.2 1.2 L6 6 M6 1.2 L1.2 6" stroke="#a4a4a8" stroke-width="1"/></svg>
<svg class="a" style="left:412.5px;top:48.5px;" width="16" height="16" viewBox="0 0 16 16"><circle cx="6" cy="6" r="5.2" fill="#fff" stroke="#303030" stroke-width="1.2"/><path d="M3.5 6 H8.5 M6 3.5 V8.5" stroke="#202020" stroke-width="1.1"/><path d="M9.8 9.8 L14.8 14.8" stroke="#303030" stroke-width="2.2"/></svg>
<svg class="a" style="left:436px;top:48.5px;" width="16" height="16" viewBox="0 0 16 16"><circle cx="6" cy="6" r="5.2" fill="#ececf0" stroke="#a4a4a8" stroke-width="1.2"/><path d="M3.5 6 H8.5" stroke="#a4a4a8" stroke-width="1.1"/><path d="M9.8 9.8 L14.8 14.8" stroke="#a4a4a8" stroke-width="2.2"/></svg>
<svg class="a" style="left:466px;top:49px;" width="13" height="15" viewBox="0 0 13 15"><path d="M0.75 0.75 H12.25 V10.25 H10 L10.5 13.5 L7.5 10.25 H0.75 Z" fill="#fcfcd8" stroke="#202020" stroke-width="1.5"/><text x="3.2" y="8.8" font-size="10" font-weight="bold" fill="#2828a0" font-family="Liberation Sans,sans-serif">?</text></svg>
<svg class="a" style="left:4px;top:97px;" width="17" height="16" viewBox="0 0 17 16"><rect x="3.5" y="2.5" width="13" height="12.5" fill="#181818"/><rect x="5" y="5" width="10" height="7.5" fill="#fff"/><rect x="4.6" y="3.2" width="1.2" height="1.1" fill="#fff"/><rect x="4.6" y="13.2" width="1.2" height="1.1" fill="#fff"/><rect x="7.0" y="3.2" width="1.2" height="1.1" fill="#fff"/><rect x="7.0" y="13.2" width="1.2" height="1.1" fill="#fff"/><rect x="9.4" y="3.2" width="1.2" height="1.1" fill="#fff"/><rect x="9.4" y="13.2" width="1.2" height="1.1" fill="#fff"/><rect x="11.8" y="3.2" width="1.2" height="1.1" fill="#fff"/><rect x="11.8" y="13.2" width="1.2" height="1.1" fill="#fff"/><rect x="14.2" y="3.2" width="1.2" height="1.1" fill="#fff"/><rect x="14.2" y="13.2" width="1.2" height="1.1" fill="#fff"/><g stroke="#f0f000" stroke-width="1.05"><path d="M4.5 0 V9 M0 4.5 H9 M1.3 1.3 L7.7 7.7 M7.7 1.3 L1.3 7.7"/></g><rect x="3.5" y="3.5" width="2" height="2" fill="#ffffd8"/></svg>
<svg class="a" style="left:26.5px;top:97px;" width="17" height="16" viewBox="0 0 17 16"><rect x="4" y="4.5" width="12.5" height="10.5" fill="#fff" stroke="#909098" stroke-width="1.2"/><path d="M6.5 7.4 H14.7 M8.5 9.9 H14.7 M10.5 12.4 H14.7" stroke="#20a0a0" stroke-width="1.15"/><g stroke="#f0f000" stroke-width="1.05"><path d="M4.5 0 V9 M0 4.5 H9 M1.3 1.3 L7.7 7.7 M7.7 1.3 L1.3 7.7"/></g><rect x="3.5" y="3.5" width="2" height="2" fill="#ffffd8"/></svg>
<svg class="a" style="left:49.7px;top:97px;" width="17" height="16" viewBox="0 0 17 16"><rect x="4" y="4.5" width="12.5" height="10.5" fill="#fff" stroke="#b02828" stroke-width="1.2"/><path d="M6.5 7.4 H14.7 M8.5 9.9 H14.7 M10.5 12.4 H14.7" stroke="#e03030" stroke-width="1.15"/><g stroke="#f0f000" stroke-width="1.05"><path d="M4.5 0 V9 M0 4.5 H9 M1.3 1.3 L7.7 7.7 M7.7 1.3 L1.3 7.7"/></g><rect x="3.5" y="3.5" width="2" height="2" fill="#ffffd8"/></svg>
<svg class="a" style="left:72.6px;top:97px;" width="17" height="16" viewBox="0 0 17 16"><rect x="3.5" y="4" width="13" height="11" fill="#90d8e8"/><rect x="3.5" y="10.5" width="13" height="4.5" fill="#808050"/><path d="M5 15 L7 9 L9 11 L11 7.5 L12.5 8.5 L9.5 12 L8.5 15 Z" fill="#40a030"/><circle cx="13.5" cy="6.5" r="1.8" fill="#f0e020"/><g stroke="#f0f000" stroke-width="1.05"><path d="M4.5 0 V9 M0 4.5 H9 M1.3 1.3 L7.7 7.7 M7.7 1.3 L1.3 7.7"/></g><rect x="3.5" y="3.5" width="2" height="2" fill="#ffffd8"/></svg>
<svg class="a" style="left:96px;top:97px;" width="17" height="16" viewBox="0 0 17 16"><path d="M6 7 H9 L13 3 V14.5 L9 11 H6 Z" fill="#d8d8d8" stroke="#404040" stroke-width="1"/><path d="M14.5 5 Q16.5 8.5 14.5 12.5" fill="none" stroke="#404040" stroke-width="1.1"/><g stroke="#f0f000" stroke-width="1.05"><path d="M4.5 0 V9 M0 4.5 H9 M1.3 1.3 L7.7 7.7 M7.7 1.3 L1.3 7.7"/></g><rect x="3.5" y="3.5" width="2" height="2" fill="#ffffd8"/></svg>
<svg class="a" style="left:125px;top:96.5px;" width="17" height="16" viewBox="0 0 17 16"><text x="1" y="5.5" font-size="6.5" font-weight="bold" fill="#303030" font-family="Liberation Sans,sans-serif" textLength="15.5" lengthAdjust="spacingAndGlyphs">+VTS</text><circle cx="6" cy="10.5" r="5" fill="#e8ecf0" stroke="#707880" stroke-width="0.9"/><path d="M6 10.5 L1.3 9 A5 5 0 0 1 4 6 Z" fill="#50c850"/><path d="M6 10.5 L10.7 12 A5 5 0 0 1 8 15 Z" fill="#e0e040"/><circle cx="6" cy="10.5" r="1.4" fill="#fff" stroke="#404040" stroke-width="0.7"/></svg>
<div class="a" style="left:0;top:0;z-index:11">
<svg class="a" style="left:66px;top:269px;" width="17" height="16" viewBox="0 0 17 16"><rect x="3.5" y="2.5" width="13" height="12.5" fill="#181818"/><rect x="5" y="5" width="10" height="7.5" fill="#fff"/><rect x="4.6" y="3.2" width="1.2" height="1.1" fill="#fff"/><rect x="4.6" y="13.2" width="1.2" height="1.1" fill="#fff"/><rect x="7.0" y="3.2" width="1.2" height="1.1" fill="#fff"/><rect x="7.0" y="13.2" width="1.2" height="1.1" fill="#fff"/><rect x="9.4" y="3.2" width="1.2" height="1.1" fill="#fff"/><rect x="9.4" y="13.2" width="1.2" height="1.1" fill="#fff"/><rect x="11.8" y="3.2" width="1.2" height="1.1" fill="#fff"/><rect x="11.8" y="13.2" width="1.2" height="1.1" fill="#fff"/><rect x="14.2" y="3.2" width="1.2" height="1.1" fill="#fff"/><rect x="14.2" y="13.2" width="1.2" height="1.1" fill="#fff"/><g stroke="#f0f000" stroke-width="1.05"><path d="M4.5 0 V9 M0 4.5 H9 M1.3 1.3 L7.7 7.7 M7.7 1.3 L1.3 7.7"/></g><rect x="3.5" y="3.5" width="2" height="2" fill="#ffffd8"/></svg>
<svg class="a" style="left:66px;top:291px;" width="17" height="16" viewBox="0 0 17 16"><rect x="4" y="4.5" width="12.5" height="10.5" fill="#fff" stroke="#909098" stroke-width="1.2"/><path d="M6.5 7.4 H14.7 M8.5 9.9 H14.7 M10.5 12.4 H14.7" stroke="#20a0a0" stroke-width="1.15"/><g stroke="#f0f000" stroke-width="1.05"><path d="M4.5 0 V9 M0 4.5 H9 M1.3 1.3 L7.7 7.7 M7.7 1.3 L1.3 7.7"/></g><rect x="3.5" y="3.5" width="2" height="2" fill="#ffffd8"/></svg>
<svg class="a" style="left:66px;top:313px;" width="17" height="16" viewBox="0 0 17 16"><rect x="4" y="4.5" width="12.5" height="10.5" fill="#fff" stroke="#b02828" stroke-width="1.2"/><path d="M6.5 7.4 H14.7 M8.5 9.9 H14.7 M10.5 12.4 H14.7" stroke="#e03030" stroke-width="1.15"/><g stroke="#f0f000" stroke-width="1.05"><path d="M4.5 0 V9 M0 4.5 H9 M1.3 1.3 L7.7 7.7 M7.7 1.3 L1.3 7.7"/></g><rect x="3.5" y="3.5" width="2" height="2" fill="#ffffd8"/></svg>
<svg class="a" style="left:66px;top:335px;" width="17" height="16" viewBox="0 0 17 16"><rect x="3.5" y="4" width="13" height="11" fill="#90d8e8"/><rect x="3.5" y="10.5" width="13" height="4.5" fill="#808050"/><path d="M5 15 L7 9 L9 11 L11 7.5 L12.5 8.5 L9.5 12 L8.5 15 Z" fill="#40a030"/><circle cx="13.5" cy="6.5" r="1.8" fill="#f0e020"/><g stroke="#f0f000" stroke-width="1.05"><path d="M4.5 0 V9 M0 4.5 H9 M1.3 1.3 L7.7 7.7 M7.7 1.3 L1.3 7.7"/></g><rect x="3.5" y="3.5" width="2" height="2" fill="#ffffd8"/></svg>
<svg class="a" style="left:66px;top:359.5px;" width="17" height="16" viewBox="0 0 17 16"><text x="1" y="5.5" font-size="6.5" font-weight="bold" fill="#303030" font-family="Liberation Sans,sans-serif" textLength="15.5" lengthAdjust="spacingAndGlyphs">+VTS</text><circle cx="6" cy="10.5" r="5" fill="#e8ecf0" stroke="#707880" stroke-width="0.9"/><path d="M6 10.5 L1.3 9 A5 5 0 0 1 4 6 Z" fill="#50c850"/><path d="M6 10.5 L10.7 12 A5 5 0 0 1 8 15 Z" fill="#e0e040"/><circle cx="6" cy="10.5" r="1.4" fill="#fff" stroke="#404040" stroke-width="0.7"/></svg>
<svg class="a" style="left:66px;top:479.5px;" width="17" height="15" viewBox="0 0 17 15"><rect x="0.75" y="0.75" width="13" height="10" fill="#fff" stroke="#505058" stroke-width="1.2"/><rect x="0.3" y="0.3" width="14" height="2.8" fill="#3038b0"/><rect x="1.5" y="3.2" width="3" height="7" fill="#e8e8f0"/><path d="M5.5 7.5 Q5.5 6.5 6.5 6.5 H9 L10 7.8 H15 Q16 7.8 16 8.8 V13.5 H5.5 Z" fill="#f4f0a0" stroke="#707078" stroke-width="1"/></svg>
</div>
<svg class="a" style="left:22px;top:468px;" width="17" height="15" viewBox="0 0 17 15"><rect x="0.75" y="0.75" width="13" height="10" fill="#fff" stroke="#505058" stroke-width="1.2"/><rect x="0.3" y="0.3" width="14" height="2.8" fill="#3038b0"/><rect x="1.5" y="3.2" width="3" height="7" fill="#e8e8f0"/><path d="M5.5 7.5 Q5.5 6.5 6.5 6.5 H9 L10 7.8 H15 Q16 7.8 16 8.8 V13.5 H5.5 Z" fill="#f4f0a0" stroke="#707078" stroke-width="1"/></svg>
<svg class="a" style="left:212px;top:75px;" width="16" height="16" viewBox="0 0 16 16"><path d="M7.5 5 H9.2 V11.6 H10.5 M9.2 6.2 H10.5" fill="none" stroke="#707070" stroke-width="1"/><path d="M0.5 4 L4.6 0.6 L8.4 4 L4.2 7.4 Z" fill="#f0e820" stroke="#303000" stroke-width="0.8"/><path d="M10 6.3 L13.6 3.4 L16 5.8 L12.4 8.8 Z" fill="#d02070" stroke="#300018" stroke-width="0.8"/><path d="M9.2 12.6 L12.8 10 L15.2 12.6 L11.6 15.4 Z" fill="#20b8b0" stroke="#003838" stroke-width="0.8"/></svg>
<svg class="a" style="left:214px;top:97.5px;" width="15" height="11" viewBox="0 0 15 11"><path d="M0 5.5 H6.5" stroke="#000" stroke-width="1.3"/><path d="M6.8 0.5 V10.5" stroke="#000" stroke-width="1.6"/><path d="M7.6 2.2 Q9.5 3.2 10.5 3.2 H12 Q13 3 14.5 1.5 V9.5 Q13 8 12 7.8 H10.5 Q9.5 7.8 7.6 8.8 Z" fill="#f4f4f4" stroke="#000" stroke-width="1.1"/></svg>
<div class="a" style="left:210px;top:115.5px;width:19px;height:21px;background:#eaeaee;border:1px solid #a8a8b4;border-right:none;"></div>
<svg class="a" style="left:216.8px;top:119.4px;" width="9" height="14" viewBox="0 0 9 14"><path d="M0.5 0.5 V11.5 L3.2 9 L5.2 13.5 L7 12.7 L5 8.3 H8.6 Z" fill="#000"/></svg>
<svg class="a" style="left:216px;top:143px;" width="13" height="12" viewBox="0 0 13 12"><path d="M5.5 0.5 V10 M0.5 5 H10.5" stroke="#404044" stroke-width="1.1"/><path d="M7 7 L12 11" stroke="#b8b8c0" stroke-width="1"/></svg>
<svg class="a" style="left:214px;top:162px;" width="15" height="17" viewBox="0 0 15 17"><rect x="0.5" y="0.5" width="11" height="5" fill="#f4f4f6" stroke="#c0c0c8" stroke-width="1"/><path d="M6 6 V9 H10" fill="none" stroke="#b0b0b8"/><path d="M11 8 V16 M7 12 H15" stroke="#404044" stroke-width="1.3"/></svg>
<svg class="a" style="left:214px;top:183px;" width="15" height="15" viewBox="0 0 15 15"><circle cx="5" cy="5" r="4.5" fill="#f4f4f6" stroke="#a8a8b0" stroke-width="1"/><path d="M2 2 L8 8 M8 2 L2 8" stroke="#c0c0c8" stroke-width="1"/><path d="M11.5 7 V14 M8 10.5 H15" stroke="#404044" stroke-width="1.3"/></svg>
<svg class="a" style="left:215px;top:208px;" width="14" height="16" viewBox="0 0 14 16"><rect x="0.5" y="0.5" width="12" height="9" fill="#f8f8fa" stroke="#a0a0a8" stroke-width="1"/><text x="3.4" y="8" font-size="7.5" fill="#505058" font-family="Liberation Sans,sans-serif">M</text><path d="M6.5 10 V15.5 M3.5 12.8 H9.5" stroke="#404044" stroke-width="1.2"/></svg>
<div class="a" style="left:210px;top:228.5px;width:18px;height:1px;background:#c8c8d0;"></div>
<svg class="a" style="left:215px;top:233px;" width="15" height="14" viewBox="0 0 15 14"><rect x="0.5" y="0.5" width="11" height="9.5" fill="#e4e4e8" stroke="#a8a8b0" stroke-width="1"/><path d="M1 3 H11 M1 7.5 H11" stroke="#a8a8b0" stroke-width="1" stroke-dasharray="1.5 1"/><path d="M9.5 6 V13 L11.2 11.5 L12.5 14" fill="#fff" stroke="#707078" stroke-width="0.9"/></svg>
<svg class="a" style="left:215px;top:256px;" width="15" height="10" viewBox="0 0 15 10"><rect x="0.5" y="0.5" width="13" height="9" fill="#e4e4e8" stroke="#606068" stroke-width="1.2"/><path d="M3 5 H11" stroke="#909098" stroke-width="2" stroke-dasharray="2 1"/></svg>
<svg class="a" style="left:238.8px;top:119.4px;" width="9" height="14" viewBox="0 0 9 14"><path d="M0.5 0.5 V11.5 L3.2 9 L5.2 13.5 L7 12.7 L5 8.3 H8.6 Z" fill="#000"/></svg>
<svg class="a" style="left:236px;top:141px;" width="17" height="15" viewBox="0 0 17 15"><path d="M3.5 1 V6 M1 3.5 H6" stroke="#202020" stroke-width="1.1"/><path d="M10.5 3 L16 8.5 L10.5 14 L5 8.5 Z" fill="#98f098" stroke="#505050" stroke-width="0.9" stroke-dasharray="1.2 0.8"/></svg>
<svg class="a" style="left:236px;top:164px;" width="17" height="13" viewBox="0 0 17 13"><path d="M8.5 0.8 L16 6.3 L8.5 11.8 L1 6.3 Z" fill="#98f098" stroke="#808080" stroke-width="0.9" stroke-dasharray="1.2 0.8"/><path d="M4 6.3 L8.5 3 L13 6.3 L8.5 9.6 Z" fill="#78e078"/></svg>
<svg class="a" style="left:237px;top:185px;" width="16" height="13" viewBox="0 0 16 13"><path d="M5.5 1.5 H14.5 L10 8 H1 Z" fill="#fff" stroke="#303030" stroke-width="1.1"/><path d="M1 8 V10.8 H10 V8 M10 10.8 L14.5 4.5 V1.5" fill="#f4f4f4" stroke="#303030" stroke-width="1.1"/></svg>
<svg class="a" style="left:236px;top:206px;" width="17" height="17" viewBox="0 0 17 17"><path d="M1 3 H16" stroke="#c02020" stroke-width="1" stroke-dasharray="1 1"/><path d="M1.2 1.8 L2.4 3 L1.2 4.2 L0 3 Z M8.5 1.8 L9.7 3 L8.5 4.2 L7.3 3 Z M15.6 1.8 L16.8 3 L15.6 4.2 L14.4 3 Z" fill="#fff" stroke="#303030" stroke-width="0.7"/><path d="M5.5 3 L9.5 12 M11.5 3 L7.5 12" stroke="#303030" stroke-width="1.1"/><circle cx="6.3" cy="13.8" r="2" fill="none" stroke="#3838b0" stroke-width="1.1"/><circle cx="10.7" cy="13.8" r="2" fill="none" stroke="#3838b0" stroke-width="1.1"/></svg>
<div class="a" style="left:234px;top:228.5px;width:20px;height:1px;background:#c8c8d0;"></div>
<svg class="a" style="left:236px;top:235px;" width="17" height="13" viewBox="0 0 17 13"><path d="M10 1 L15.5 6.5 L10 12 L4.5 6.5 Z" fill="#d8d8dc" stroke="#b4b4bc" stroke-width="0.9"/><path d="M10 3.5 L13 6.5 L10 9.5 L7 6.5 Z" fill="#b4b4bc"/><path d="M4.5 6.5 H0.8 M2.5 4.8 L0.8 6.5 L2.5 8.2" fill="none" stroke="#b4b4bc" stroke-width="1"/></svg>
<svg class="a" style="left:236px;top:257px;" width="17" height="13" viewBox="0 0 17 13"><path d="M7 1 L12.5 6.5 L7 12 L1.5 6.5 Z" fill="#d8d8dc" stroke="#b4b4bc" stroke-width="0.9"/><path d="M7 3.5 L10 6.5 L7 9.5 L4 6.5 Z" fill="#b4b4bc"/><path d="M12.5 6.5 H16.2 M14.5 4.8 L16.2 6.5 L14.5 8.2" fill="none" stroke="#b4b4bc" stroke-width="1"/></svg>
<svg class="a" style="left:52px;top:468px;z-index:-0" width="16" height="14" viewBox="0 0 16 14"><path d="M1 13 V2.5 H5 L6.5 4 H11 V7" fill="#f4f098" stroke="#707020" stroke-width="1.2"/><path d="M1 13 L4.5 7 H15 L11.5 13 Z" fill="#a8a838" stroke="#606018" stroke-width="1.2"/></svg>
<svg class="a" style="left:227px;top:468px;" width="10" height="15" viewBox="0 0 10 15"><path d="M2.5 2 V15" stroke="#707078" stroke-width="1"/><rect x="1" y="0.5" width="8" height="3" fill="#fff"/><rect x="1" y="3" width="8" height="3.5" fill="#f04848"/><rect x="1" y="7" width="8" height="3" fill="#fff"/><rect x="2" y="10" width="7" height="3.5" fill="#48e060"/></svg>
<svg class="a" style="left:243px;top:467px;" width="16" height="16" viewBox="0 0 16 16"><text x="6.5" y="6.5" font-size="7.5" fill="#909098" font-family="Liberation Sans,sans-serif">?</text><circle cx="3" cy="12.5" r="2.6" fill="#a0f0f0" stroke="#202020" stroke-width="1.1"/><circle cx="10" cy="12.5" r="2.6" fill="#a0f0f0" stroke="#202020" stroke-width="1.1"/><path d="M5.6 12 H7.4 M1.2 10.5 L5.5 5 M11.5 10.5 L15 6 L15.6 8" fill="none" stroke="#202020" stroke-width="1.1"/></svg>
<svg class="a" style="left:266px;top:468px;" width="16" height="15" viewBox="0 0 16 15"><path d="M0 1.3 H16" stroke="#f04040" stroke-width="1.2"/><path d="M0 15 V7 L1 6 L2 9 L3 5.5 L4 10 L5 7 L6 11 L7 6 L8 9 L9 5 L10 7.5 L11 5 L12 4 L13 6.5 L14 5.5 L15 7 L16 6.5 V15 Z" fill="#4848e0"/></svg>
<svg class="a" style="left:295px;top:468px;" width="16" height="15" viewBox="0 0 16 15"><rect x="0.6" y="0.6" width="9" height="9" fill="#dcdce0" stroke="#a4a4a8" stroke-width="1.2"/><rect x="2.2" y="2.2" width="2.3" height="2.3" fill="#a4a4a8"/><rect x="5.7" y="2.2" width="2.3" height="2.3" fill="#a4a4a8"/><rect x="2.2" y="5.7" width="2.3" height="2.3" fill="#a4a4a8"/><rect x="5.7" y="5.7" width="2.3" height="2.3" fill="#a4a4a8"/><path d="M10 4.6 H15.4 V14.4 H5 V10" fill="#e4e4e8" stroke="#a4a4a8" stroke-width="1.2"/><path d="M7 11.5 H13.5" stroke="#a4a4a8" stroke-width="1.2"/></svg>
<svg class="a" style="left:319px;top:468px;" width="16" height="16" viewBox="0 0 16 16"><path d="M8 1 H3.5 Q1.2 1 1.2 3 V9.5 Q1.2 11.5 3.5 11.5 H8 V9.5 H4 V3 H8 Z" fill="#e8e040" stroke="#404010" stroke-width="1"/><rect x="5" y="3.6" width="10.5" height="5.8" fill="#fff" stroke="#202020" stroke-width="1.1"/><path d="M5.5 4.3 H15 M5.5 8.7 H15" stroke="#202020" stroke-width="1.4" stroke-dasharray="1.2 1"/><path d="M5 11.5 V14 M1.5 14.3 H9" stroke="#404010" stroke-width="1.3"/></svg>
</body>
</html>
